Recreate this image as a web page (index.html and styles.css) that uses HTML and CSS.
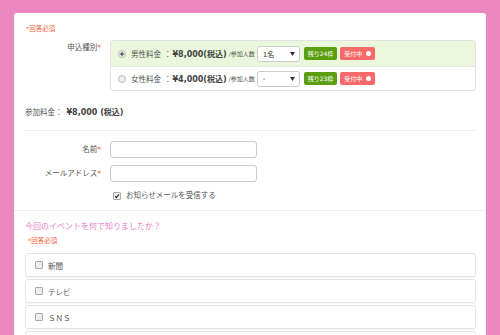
FILE: index.html
```html
<!DOCTYPE html>
<html lang="ja">
<head>
<meta charset="utf-8">
<title>申込フォーム</title>
<link rel="stylesheet" href="styles.css">
</head>
<body>
<div class="card">
  <section class="sec">
    <p class="req">*回答必須</p>
    <div class="row row-top">
      <div class="lbl lbl-top">申込種別<span class="ast">*</span></div>
      <div class="choices">
        <div class="choice on">
          <span class="radio checked"></span>
          <span class="cname">男性料金</span>
          <span class="colon">：</span>
          <span class="price">¥8,000(税込)</span>
          <span class="per">/参加人数</span>
          <div class="select"><span>1名</span><svg width="5" height="4" viewBox="0 0 5 4"><path d="M0 0H5L2.5 4Z" fill="#333"/></svg></div>
          <span class="badge green">残り24枠</span>
          <span class="badge red">受付中<i class="dot"></i></span>
        </div>
        <div class="choice">
          <span class="radio"></span>
          <span class="cname">女性料金</span>
          <span class="colon">：</span>
          <span class="price">¥4,000(税込)</span>
          <span class="per">/参加人数</span>
          <div class="select"><span>-</span><svg width="5" height="4" viewBox="0 0 5 4"><path d="M0 0H5L2.5 4Z" fill="#333"/></svg></div>
          <span class="badge green">残り23枠</span>
          <span class="badge red">受付中<i class="dot"></i></span>
        </div>
      </div>
    </div>
    <p class="fee">参加料金：<b>¥8,000 (税込)</b></p>
    <hr class="divider">
    <div class="row row-mid">
      <div class="lbl">名前<span class="ast">*</span></div>
      <div class="input"></div>
    </div>
    <div class="row row-mid row-mid2">
      <div class="lbl">メールアドレス<span class="ast">*</span></div>
      <div class="input"></div>
    </div>
    <div class="optin"><span class="cb on"><svg width="6" height="6" viewBox="0 0 6 6"><path d="M1 3.2L2.4 4.6L5 1.4" fill="none" stroke="#333" stroke-width="1.3"/></svg></span>お知らせメールを受信する</div>
  </section>
  <section class="sec2">
    <p class="q">今回のイベントを何で知りましたか？</p>
    <p class="req req2">*回答必須</p>
    <div class="opts">
      <div class="opt"><span class="cb"></span>新聞</div>
      <div class="opt"><span class="cb"></span>テレビ</div>
      <div class="opt"><span class="cb"></span>ＳＮＳ</div>
      <div class="opt"><span class="cb"></span></div>
    </div>
  </section>
</div>
</body>
</html>
```
FILE: styles.css
```css
body {
  margin: 0;
  background: #ec88bf;
  font-family: "DejaVu Sans", "Noto Sans CJK JP", sans-serif;
  color: #555;
}
.card {
  margin: 13px 14px 0;
  background: #fff;
  border-radius: 3px;
  min-height: 330px;
}
.sec {
  padding: 11px 10px 9px 11px;
}
.req {
  margin: 0;
  padding-left: 1px;
  font-size: 6.5px;
  line-height: 10px;
  color: #f4623a;
}
.row {
  display: flex;
}
.row-top {
  margin-top: 6px;
  align-items: flex-start;
}
.lbl {
  flex: none;
  width: 76px;
  padding-right: 9px;
  text-align: right;
  font-size: 7.5px;
  line-height: 10px;
}
.lbl-top {
  padding-top: 3px;
}
.ast {
  color: #f4623a;
}
.choices {
  flex: 1;
  border: 1px solid #e2e2e2;
  border-radius: 3px;
  overflow: hidden;
}
.choice {
  display: flex;
  align-items: center;
  height: 25px;
  padding-left: 7px;
}
.choice.on {
  background: #ebf7dc;
}
.choice + .choice {
  border-top: 1px solid #e6e6e6;
  height: 23px;
}
.radio {
  flex: none;
  width: 6px;
  height: 6px;
  border: 1px solid #bbb;
  border-radius: 50%;
  background: #eee;
  margin-right: 5px;
}
.radio.checked {
  background: radial-gradient(circle, #666 0 1.4px, #eee 2px);
}
.cname {
  font-size: 7.5px;
}
.colon {
  font-size: 7.5px;
  margin: 0 1px 0 3px;
}
.price {
  font-size: 8px;
  font-weight: bold;
  color: #444;
}
.per {
  font-size: 6px;
  margin-left: 2px;
}
.select {
  box-sizing: border-box;
  display: flex;
  align-items: center;
  justify-content: space-between;
  width: 43px;
  height: 16px;
  margin-left: 2px;
  padding: 0 4px 0 5px;
  border: 1px solid #ccc;
  border-radius: 3px;
  background: #fff;
  font-size: 7px;
  color: #333;
}
.badge {
  display: flex;
  align-items: center;
  height: 13px;
  padding: 0 4px;
  margin-left: 4px;
  border-radius: 2px;
  font-size: 6px;
  color: #fff;
}
.badge.green {
  background: #5b9e0f;
}
.badge.red {
  margin-left: 3px;
  background: #f76a6a;
}
.dot {
  width: 5px;
  height: 5px;
  margin-left: 4px;
  border-radius: 50%;
  background: #fff;
}
.fee {
  margin: 16px 0 0;
  font-size: 7.5px;
  line-height: 12px;
}
.fee b {
  margin-left: 4px;
  font-size: 8px;
  color: #444;
}
.divider {
  border: 0;
  border-top: 1px solid #eee;
  margin: 11px 0 0;
}
.row-mid {
  align-items: center;
  margin-top: 10px;
}
.row-mid2 {
  margin-top: 7px;
}
.input {
  box-sizing: border-box;
  width: 147px;
  height: 17px;
  border: 1px solid #ccc;
  border-radius: 3px;
}
.optin {
  display: flex;
  align-items: center;
  margin: 9px 0 0 88px;
  font-size: 7.5px;
  line-height: 10px;
}
.cb {
  flex: none;
  display: flex;
  width: 6px;
  height: 6px;
  margin-right: 5px;
  border: 1px solid #aaa;
  border-radius: 1px;
  background: #eee;
}
.cb.on {
  background: #f4f4f4;
}
.sec2 {
  border-top: 1px solid #eee;
  padding: 10px 10px 0 11px;
}
.q {
  margin: 0;
  font-size: 8px;
  line-height: 12px;
  color: #e77fc4;
}
.req2 {
  margin-top: 3px;
  padding-left: 3px;
}
.opts {
  margin-top: 7px;
}
.opt {
  box-sizing: border-box;
  display: flex;
  align-items: center;
  height: 24px;
  margin-bottom: 2px;
  padding-left: 9px;
  border: 1px solid #e4e4e4;
  border-radius: 3px;
  box-shadow: 0 1px 1px rgba(0, 0, 0, 0.04);
  font-size: 7.5px;
}
```
